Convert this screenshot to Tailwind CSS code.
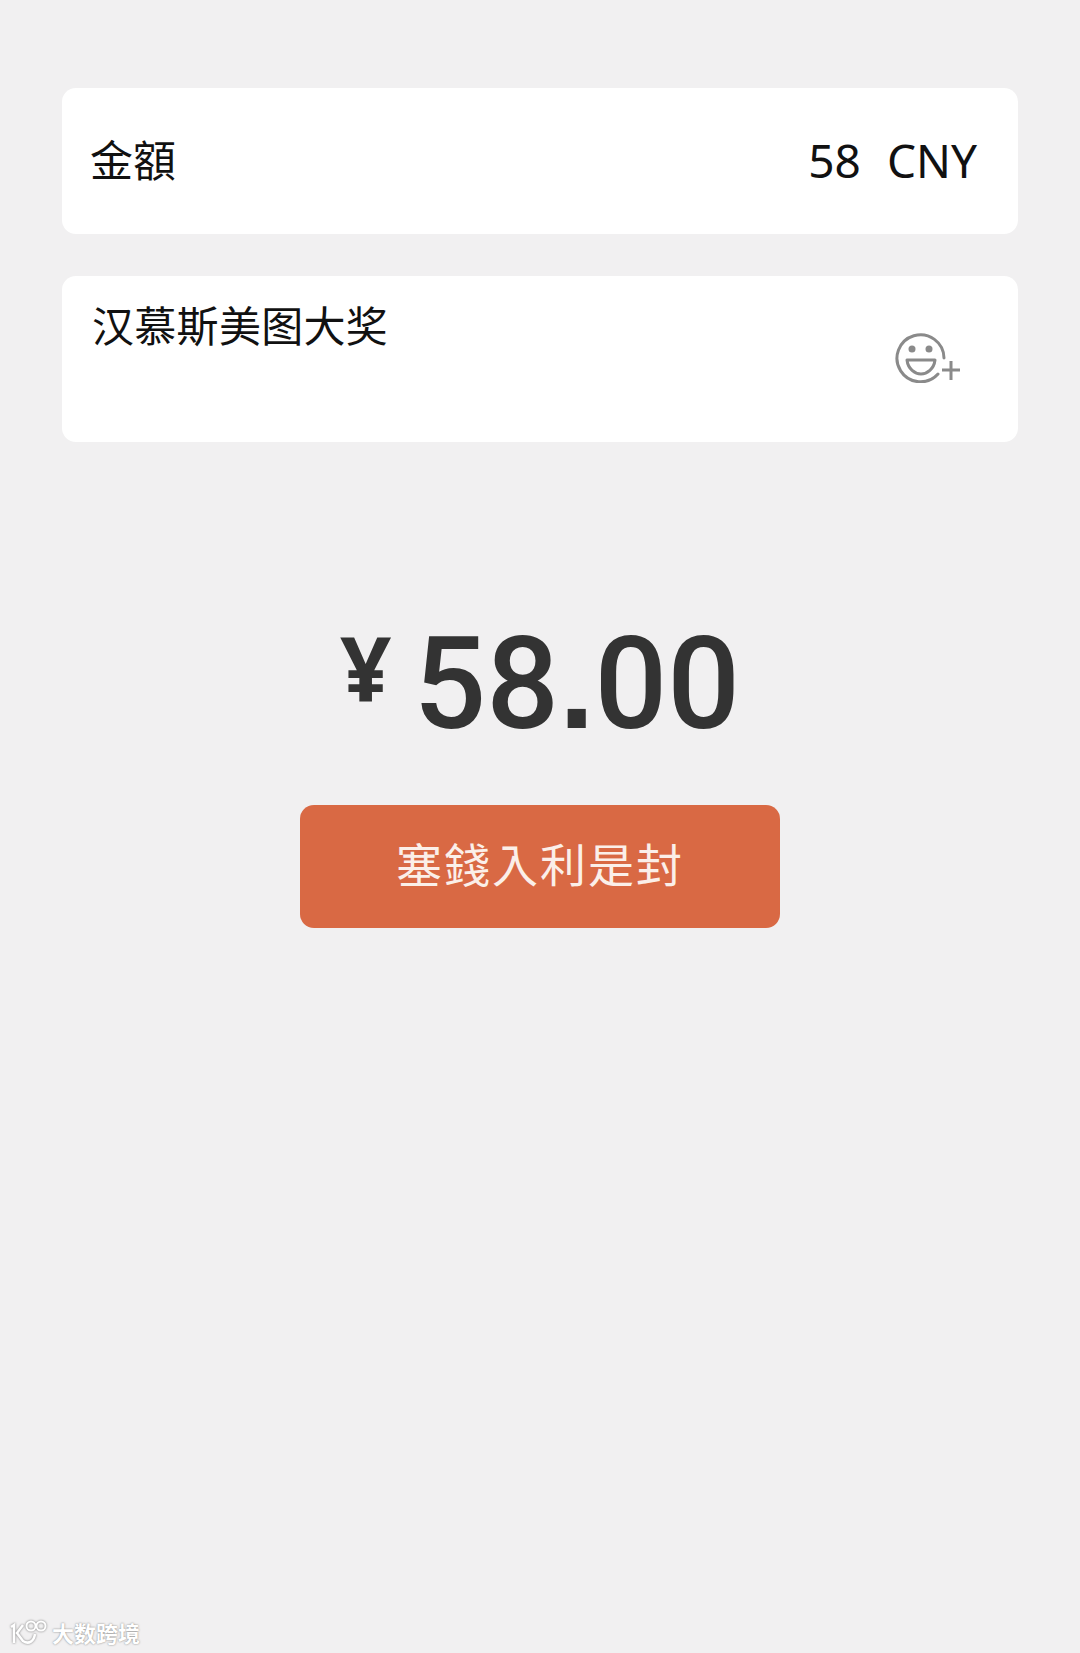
<!DOCTYPE html>
<html lang="zh-Hant">
<head>
    <meta charset="UTF-8">
    <meta name="viewport" content="width=device-width, initial-scale=1.0">
    <title>塞錢入利是封</title>
    <script src="https://cdn.jsdelivr.net/npm/@tailwindcss/browser@4"></script>
</head>
<body class="bg-[#f1f0f1] font-['Noto_Sans','Noto_Sans_CJK_TC',sans-serif]">
    <div class="relative h-[1653px] w-[1080px] overflow-hidden pt-[88px] px-[62px]">

        <!-- Amount -->
        <div class="flex h-[146px] items-center justify-between rounded-[14px] bg-white pb-[2px] pl-[28px] pr-[41px] text-[#111] leading-none">
            <span class="text-[43px]">金額</span>
            <span class="flex gap-[26px] text-[46px]"><span>58</span><span>CNY</span></span>
        </div>

        <!-- Greeting -->
        <div class="mt-[42px] flex h-[166px] justify-between rounded-[14px] bg-white pl-[30px] pr-[56px]">
            <span class="mt-[29px] text-[42px] tracking-[0.3px] leading-none text-[#111]">汉慕斯美图大奖</span>
            <svg class="mt-[53px] h-[54px] w-[68px]" viewBox="0 0 68 54" fill="none" stroke="#8a8a8a" stroke-width="3">
                <path d="M44 45A23.500 23.500 0 1 1 50 29" stroke-linecap="round"/>
                <circle cx="18" cy="20" r="3.500" fill="#8a8a8a" stroke="none"/>
                <circle cx="35" cy="20" r="3.500" fill="#8a8a8a" stroke="none"/>
                <path d="M13 31H41C40 40 33 45 27 45S14 40 13 31Z" stroke-linejoin="round"/>
                <path d="M48 41H66M57 32V51"/>
            </svg>
        </div>

        <!-- Total -->
        <div class="mt-[171px] flex h-[148px] items-start justify-center text-[#333]">
            <span class="mt-[4px] mr-[22px] text-[90px] leading-[100px] font-bold">¥</span>
            <span class="-mt-[3px] font-['Roboto'] text-[128px] leading-[148px] font-medium">58<span class="font-['Liberation_Sans'] font-bold">.</span>00</span>
        </div>

        <!-- Button -->
        <button class="mx-auto mt-[44px] flex h-[123px] w-[480px] items-center justify-center rounded-[14px] bg-[#d96944] pb-[4px] text-[46px] tracking-[2px] text-[#fbefe9]">塞錢入利是封</button>

        <!-- Watermark -->
        <div class="absolute left-[9px] bottom-[6px] flex items-center gap-[3px] text-[22px] leading-none font-bold text-white [text-shadow:0_0_2px_#777]">
            <svg class="h-[28px] w-[40px]" viewBox="0 0 40 28" fill="none" stroke="#fff" stroke-width="2.500" style="filter:drop-shadow(0 0 1px #777)">
                <path d="M2 8L5 6V24M14 6L8 14L14 22C20 26 25 22 26 15"/>
                <circle cx="22" cy="7" r="4.500" stroke-width="2"/>
                <circle cx="32" cy="7" r="4.500" stroke-width="2"/>
            </svg>
            <span>大数跨境</span>
        </div>
    </div>
</body>
</html>
